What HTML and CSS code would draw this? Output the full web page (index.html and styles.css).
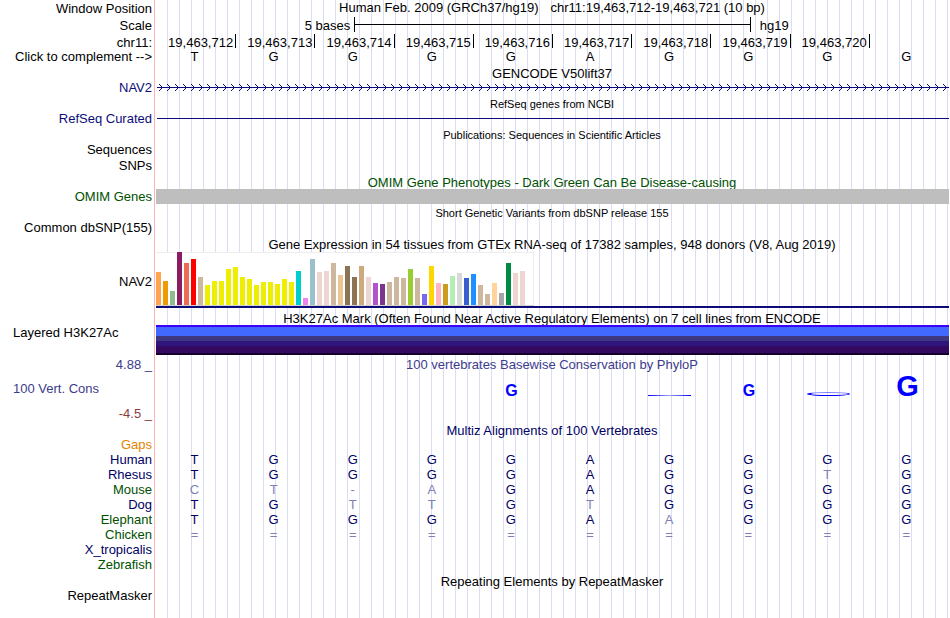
FILE: index.html
```html
<!DOCTYPE html>
<html lang="en">
    <head>
        <meta charset="UTF-8" />
        <title>Human chr11:19,463,712-19,463,721</title>
        <link rel="stylesheet" href="styles.css">
    </head>
    <body>
        <main class="browser">
            <!-- Position, scale and ruler -->
            <div class="row header-row">
                <div class="label">Window Position</div>
                <h1 class="track position">
                    <span>Human Feb. 2009 (GRCh37/hg19)</span>
                    <span>chr11:19,463,712-19,463,721 (10 bp)</span>
                </h1>
            </div>
            <div class="row header-row">
                <div class="label">Scale</div>
                <div class="track scale">
                    <span class="scale-size">5 bases</span>
                    <span class="scale-bar"></span>
                    <span class="scale-db">hg19</span>
                </div>
            </div>
            <div class="row ruler-row">
                <div class="label">chr11:</div>
                <div class="track ruler">
                    <span>19,463,712</span>
                    <span>19,463,713</span>
                    <span>19,463,714</span>
                    <span>19,463,715</span>
                    <span>19,463,716</span>
                    <span>19,463,717</span>
                    <span>19,463,718</span>
                    <span>19,463,719</span>
                    <span>19,463,720</span>
                </div>
            </div>
            <div class="row sequence-row">
                <div class="label">Click to complement --&gt;</div>
                <div class="track bases" data-bases="TGGGGAGGGG"></div>
            </div>

            <!-- Genes -->
            <h2 class="title">GENCODE V50lift37</h2>
            <div class="row">
                <div class="label navy">NAV2</div>
                <div class="track">
                    <svg class="strand" width="100%" height="15">
                        <defs>
                            <pattern id="strand" x="1" width="8" height="15" patternUnits="userSpaceOnUse">
                                <path d="M3 4L6.5 7.5L3 11" fill="none" stroke="#0c0c78" />
                            </pattern>
                        </defs>
                        <rect x="2" y="7" width="100%" height="1" fill="#0c0c78" />
                        <rect x="2" width="100%" height="15" fill="url(#strand)" />
                    </svg>
                </div>
            </div>

            <h2 class="title small">RefSeq genes from NCBI</h2>
            <div class="row">
                <div class="label navy">RefSeq Curated</div>
                <div class="track"><div class="gene-line"></div></div>
            </div>

            <h2 class="title small">Publications: Sequences in Scientific Articles</h2>
            <div class="row sequences">
                <div class="label">Sequences</div>
            </div>
            <div class="row">
                <div class="label">SNPs</div>
            </div>

            <h2 class="title green">OMIM Gene Phenotypes - Dark Green Can Be Disease-causing</h2>
            <div class="row">
                <div class="label green">OMIM Genes</div>
                <div class="track"><div class="omim-bar"></div></div>
            </div>

            <h2 class="title small">Short Genetic Variants from dbSNP release 155</h2>
            <div class="row">
                <div class="label">Common dbSNP(155)</div>
            </div>

            <!-- Expression -->
            <h2 class="title">Gene Expression in 54 tissues from GTEx RNA-seq of 17382 samples, 948 donors (V8, Aug 2019)</h2>
            <div class="row gtex-row">
                <div class="label">NAV2</div>
                <div class="track gtex">
                    <div class="gtex-plot" id="gtexPlot"></div>
                    <div class="gtex-gene"></div>
                </div>
            </div>

            <h2 class="title">H3K27Ac Mark (Often Found Near Active Regulatory Elements) on 7 cell lines from ENCODE</h2>
            <div class="row h3k-row">
                <div class="label left">Layered H3K27Ac</div>
                <div class="track"><div class="h3k-layers"></div></div>
            </div>

            <!-- Conservation -->
            <div class="row title-row">
                <div class="label indigo">4.88 _</div>
                <h2 class="track title indigo">100 vertebrates Basewise Conservation by PhyloP</h2>
            </div>
            <div class="row cons-row">
                <div class="label cons-label">
                    <span class="left indigo">100 Vert. Cons</span>
                    <span class="maroon">-4.5 _</span>
                </div>
                <div class="track logo">
                    <span></span>
                    <span></span>
                    <span></span>
                    <span></span>
                    <span class="score-mid">G</span>
                    <span></span>
                    <span><i class="flat-line"></i></span>
                    <span class="score-mid">G</span>
                    <span><i class="flat-oval"></i></span>
                    <span class="score-high">G</span>
                </div>
            </div>

            <h2 class="title navy-dark">Multiz Alignments of 100 Vertebrates</h2>
            <div class="row">
                <div class="label orange">Gaps</div>
            </div>
            <div class="row">
                <div class="label navy-dark">Human</div>
                <div class="track bases navy-dark" data-bases="TGGGGAGGGG"></div>
            </div>
            <div class="row">
                <div class="label navy-dark">Rhesus</div>
                <div class="track bases navy-dark" data-bases="TGGGGAGGtG"></div>
            </div>
            <div class="row">
                <div class="label green">Mouse</div>
                <div class="track bases navy-dark" data-bases="ct-aGAGGGG"></div>
            </div>
            <div class="row">
                <div class="label navy-dark">Dog</div>
                <div class="track bases navy-dark" data-bases="TGttGtGGGG"></div>
            </div>
            <div class="row">
                <div class="label green">Elephant</div>
                <div class="track bases navy-dark" data-bases="TGGGGAaGGG"></div>
            </div>
            <div class="row">
                <div class="label green">Chicken</div>
                <div class="track bases navy-dark" data-bases="=========="></div>
            </div>
            <div class="row">
                <div class="label navy-dark">X_tropicalis</div>
            </div>
            <div class="row">
                <div class="label green">Zebrafish</div>
            </div>

            <h2 class="title">Repeating Elements by RepeatMasker</h2>
            <div class="row">
                <div class="label">RepeatMasker</div>
            </div>
        </main>

        <script src="script.js"></script>
    </body>
</html>
```

FILE: styles.css
```css
/* --- Basic Reset --- */
* {
  margin: 0;
  padding: 0;
  box-sizing: border-box;
}

body {
  background-color: #fff;
  font-family: "Liberation Sans", Arial, Helvetica, sans-serif;
  font-size: 13px;
  line-height: 15px;
  color: #000;
}

/* Guide lines run behind every track, the label column stays white */
.browser {
  min-height: 100vh;
  margin-right: 1px;
  background-image:
    linear-gradient(#ffb4b4, #ffb4b4),
    linear-gradient(#fff, #fff),
    repeating-linear-gradient(to right, transparent 0 11px, #dcdcf5 11px 12px);
  background-position: 154px 0, 0 0, 0 0;
  background-size: 1px 100%, 156px 100%, auto;
  background-repeat: no-repeat;
}

/* --- Rows --- */
.row {
  display: flex;
  height: 15px;
}

.label {
  flex: 0 0 155px;
  padding-right: 3px;
  text-align: right;
  white-space: nowrap;
}

.left {
  padding-left: 13px;
  text-align: left;
}

.track {
  flex: 1;
  min-width: 0;
}

.title {
  height: 14px;
  margin-top: 2px;
  padding-left: 155px;
  font-size: 13px;
  font-weight: normal;
  line-height: 16px;
  text-align: center;
  white-space: nowrap;
}

.small {
  font-size: 11px;
  line-height: 14px;
}

/* --- Header --- */
.header-row {
  height: 17px;
  line-height: 17px;
}

.position {
  display: flex;
  justify-content: center;
  gap: 12px;
  font-size: 13px;
  font-weight: normal;
  line-height: 15px;
}

.scale {
  display: flex;
  padding-left: 1px;
}

.scale-size {
  width: 25%;
  padding-right: 4px;
  text-align: right;
}

.scale-bar {
  width: 50%;
  height: 15px;
  border: solid #000;
  border-width: 0 1px;
  background: linear-gradient(#000, #000) 0 7px / 100% 1px no-repeat;
}

.scale-db {
  padding-left: 9px;
}

.ruler-row {
  height: 16px;
  line-height: 17px;
}

.ruler {
  display: flex;
  padding-left: 2px;
}

.ruler span {
  width: 10%;
  height: 14px;
  padding-right: 2px;
  border-right: 1px solid #000;
  text-align: right;
}

.sequence-row {
  height: 14px;
  line-height: 14px;
}

.bases {
  display: flex;
  padding-right: 3px;
}

.bases span {
  flex: 1;
  text-align: center;
}

.bases .mismatch {
  color: #8080b4;
}

/* --- Genes --- */
.strand {
  display: block;
}

.gene-line {
  height: 1px;
  margin: 7px 0 0 2px;
  background-color: #0c0c78;
}

.sequences {
  margin-bottom: 1px;
}

.omim-bar {
  height: 15px;
  margin-left: 1px;
  background-color: #bebebe;
}

/* --- GTEx --- */
.gtex-row {
  height: 58px;
}

.gtex-row .label {
  line-height: 62px;
}

.gtex {
  padding: 1px 0 0 1px;
}

.gtex-plot {
  display: flex;
  align-items: flex-end;
  gap: 2px;
  width: 378px;
  height: 54px;
  border-bottom: 1px solid #d2d2d2;
  background-color: #fff;
  box-shadow: inset -1px 1px #eee;
}

.gtex-bar {
  width: 5px;
}

.gtex-gene {
  height: 2px;
  background-color: #0c0c78;
}

/* --- H3K27Ac --- */
.h3k-row {
  height: 30px;
}

.h3k-layers {
  height: 30px;
  margin-left: 1px;
  background: linear-gradient(
    #3c00ff 0 2px,
    #4169ff 2px 11px,
    #3e3880 11px 16px,
    #2f167c 16px 21px,
    #330a60 21px 28px,
    #14002d 28px
  );
}

/* --- Conservation --- */
.title-row {
  height: 14px;
  margin-top: 2px;
}

.title-row .title {
  margin-top: 0;
  padding-left: 0;
}

.cons-row {
  height: 50px;
}

.cons-label {
  display: flex;
  flex-direction: column;
  justify-content: space-between;
  padding-top: 10px;
}

.logo {
  display: flex;
  align-items: baseline;
  height: 30px;
  padding-right: 2px;
  color: #00f;
  font-weight: bold;
  line-height: 30px;
}

.logo span {
  flex: 1;
  text-align: center;
}

.score-mid {
  font-size: 16px;
}

.score-high {
  font-size: 29px;
}

.flat-line,
.flat-oval {
  display: inline-block;
  width: 43px;
}

.flat-line {
  height: 1px;
  background: linear-gradient(to right, #00f, #a0a0ff 50%, #00f);
}

.flat-oval {
  height: 4px;
  border: solid #00f;
  border-width: 1px 2px 1px 4px;
  border-top-color: #8080ff;
  border-radius: 50%;
}

/* --- Track colours --- */
.navy {
  color: #0c0c78;
}

.navy-dark {
  color: #000064;
}

.green {
  color: #005000;
}

.indigo {
  color: #3c3c8c;
}

.maroon {
  color: #8c3c3c;
}

.orange {
  color: #e68200;
}
```

FILE: script.js
```js
// Fill the base rows, lower case marks a base that differs
document.querySelectorAll('.bases').forEach((row) => {
  for (const base of row.dataset.bases) {
    const span = document.createElement('span');
    span.textContent = base.toUpperCase();
    if (/[a-z=-]/.test(base)) {
      span.className = 'mismatch';
    }
    row.appendChild(span);
  }
});

// Expression per tissue: [height, colour]
const tissues = [
  [33, '#ffa54f'], [24, '#ee9a00'], [14, '#8fbc8f'], [53, '#8b1c62'],
  [42, '#ee6a50'], [46, '#ff0000'], [28, '#cdb79e'], [20, '#eeee00'],
  [24, '#eeee00'], [24, '#eeee00'], [36, '#eeee00'], [38, '#eeee00'],
  [28, '#eeee00'], [26, '#eeee00'], [20, '#eeee00'], [23, '#eeee00'],
  [23, '#eeee00'], [21, '#eeee00'], [26, '#eeee00'], [23, '#eeee00'],
  [34, '#00cdcd'], [7, '#ee82ee'], [46, '#9ac0cd'], [33, '#eed5d2'],
  [34, '#eed5d2'], [42, '#cdb79e'], [30, '#eec591'], [39, '#8b7355'],
  [28, '#8b7355'], [39, '#cdaa7d'], [28, '#eed5d2'], [22, '#b452cd'],
  [21, '#7a378b'], [23, '#cdb79e'], [28, '#cdb79e'], [27, '#cdb79e'],
  [36, '#9acd32'], [27, '#cdb79e'], [11, '#7a67ee'], [39, '#ffd700'],
  [22, '#ffb6c1'], [21, '#cd9b1d'], [29, '#b4eeb4'], [32, '#d9d9d9'],
  [27, '#3a5fcd'], [31, '#1e90ff'], [20, '#cdb79e'], [11, '#cdb79e'],
  [22, '#ffd39b'], [12, '#a6a6a6'], [42, '#008b45'], [32, '#eed5d2'],
  [34, '#eed5d2'], [0, '#ff00ff'],
];

const gtexPlot = document.getElementById('gtexPlot');
tissues.forEach(([height, color]) => {
  const bar = document.createElement('div');
  bar.className = 'gtex-bar';
  bar.style.height = `${height}px`;
  bar.style.backgroundColor = color;
  gtexPlot.appendChild(bar);
});
```
